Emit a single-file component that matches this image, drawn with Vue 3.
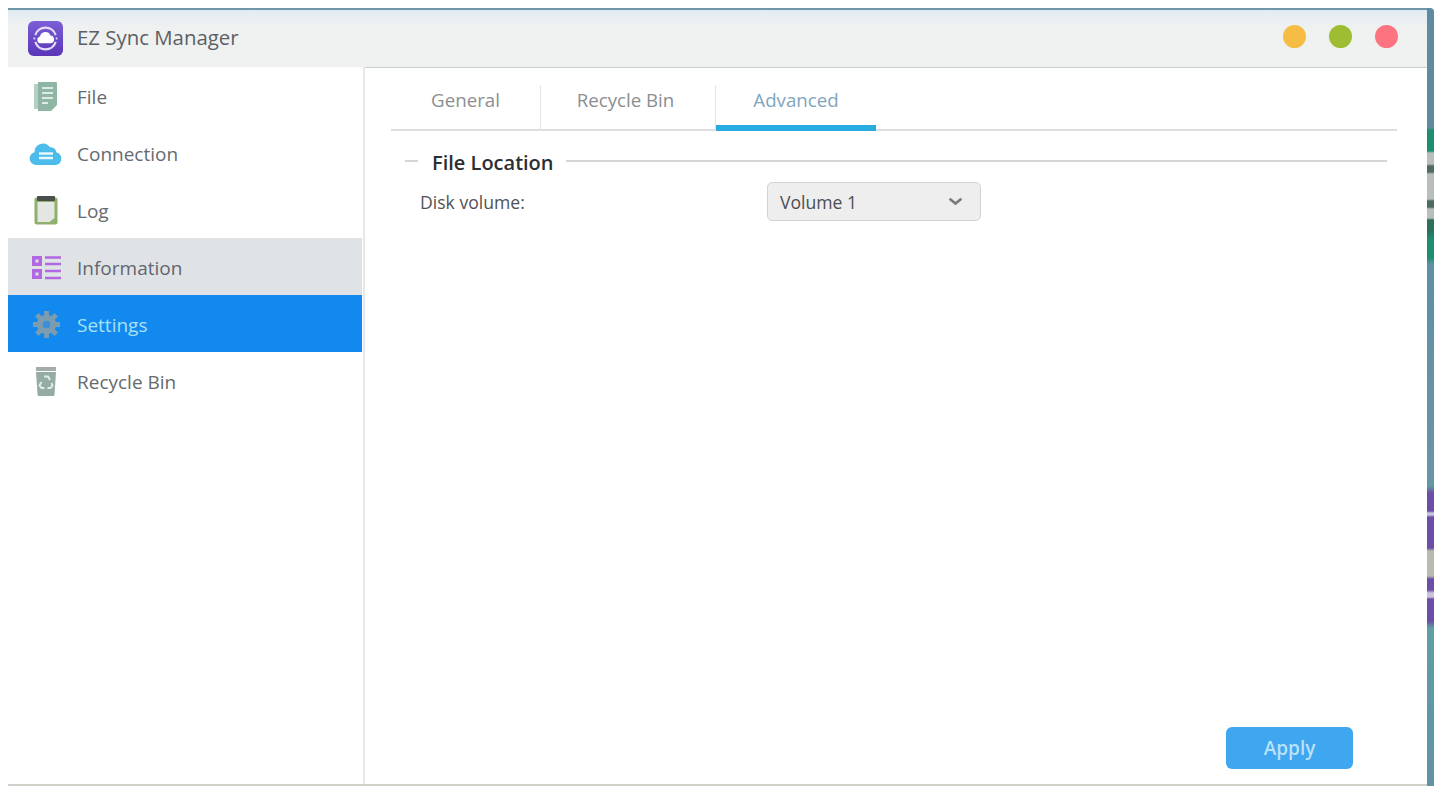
<template>
  <div class="desktop">
    <div class="window">
      <!-- title bar -->
      <header class="titlebar">
        <div class="app-logo">
          <svg viewBox="0 0 36 36" width="35" height="35">
            <defs>
              <linearGradient id="logoBg" x1="0" y1="0" x2="0" y2="1">
                <stop offset="0" stop-color="#7b5fd6" />
                <stop offset="1" stop-color="#5a35b8" />
              </linearGradient>
            </defs>
            <rect width="36" height="36" rx="6" fill="url(#logoBg)" />
            <path d="M7.500 14.500a11 11 0 0 1 21 0M28.500 21.500a11 11 0 0 1-21 0" fill="none" stroke="#e4dcf8" stroke-width="2.200" />
            <circle cx="6.500" cy="18" r="1.200" fill="#cfc4f0" />
            <circle cx="29.500" cy="18" r="1.200" fill="#cfc4f0" />
            <path d="M13 23a3.600 3.600 0 0 1-.6-7.100 5.600 5.600 0 0 1 10.700-1 4.100 4.100 0 0 1 .4 8.100z" fill="#fff" />
          </svg>
        </div>
        <span class="app-title">EZ Sync Manager</span>
        <div class="win-buttons">
          <span class="dot dot-yellow"></span>
          <span class="dot dot-green"></span>
          <span class="dot dot-red"></span>
        </div>
      </header>

      <div class="body">
        <!-- sidebar -->
        <nav class="sidebar">
          <div
            v-for="item in menu"
            :key="item.name"
            :class="['menu-item', item.state]"
          >
            <span class="menu-icon">
              <svg v-if="item.name === 'File'" viewBox="0 0 24 29" width="24" height="29">
                <rect x="0" y="2" width="6" height="25" rx="1" fill="#b4d0c5" />
                <path d="M4 0h18a1 1 0 0 1 1 1v22l-6 6H4z" fill="#8fb5a5" />
                <path d="M8 6h11M8 11h11M8 16h11M8 21h6" stroke="#dcebe4" stroke-width="2" />
              </svg>
              <svg v-else-if="item.name === 'Connection'" viewBox="0 0 34 25" width="34" height="25">
                <path d="M7 24a6.500 6.500 0 0 1-1.500-12.800A8.500 8.500 0 0 1 21 6.200a6.500 6.500 0 0 1 6.500 5.300A6.400 6.400 0 0 1 27 24z" fill="#4cbcea" />
                <path d="M10 12.500h14M10 17h14" fill="none" stroke="#e6f6fc" stroke-width="2.400" />
              </svg>
              <svg v-else-if="item.name === 'Log'" viewBox="0 0 24 29" width="24" height="29">
                <rect x="0.500" y="1.500" width="23" height="27" rx="2" fill="#8fb06c" />
                <path d="M3.500 6h17v16l-5 4h-12z" fill="#e4e6e2" />
                <rect x="3" y="0" width="18" height="5" rx="1" fill="#4a4f4c" />
              </svg>
              <svg v-else-if="item.name === 'Information'" viewBox="0 0 30 25" width="30" height="25">
                <g fill="#b268e0">
                  <path fill-rule="evenodd" d="M1 1h10v10H1zM4.500 4.500v3h3v-3z" />
                  <path fill-rule="evenodd" d="M1 14h10v10H1zM4.500 17.500v3h3v-3z" />
                </g>
                <path d="M14 2.500h16M14 9h16M14 16h16M14 23h16" stroke="#b268e0" stroke-width="2.600" />
              </svg>
              <svg v-else-if="item.name === 'Settings'" viewBox="0 0 30 30" width="29" height="29">
                <g stroke="#7c9cb0" stroke-width="5">
                  <path d="M15 1v28M1 15h28M5 5l20 20M25 5L5 25" />
                </g>
                <circle cx="15" cy="15" r="10" fill="#7c9cb0" />
                <circle cx="15" cy="15" r="4" fill="#3c8fd8" />
              </svg>
              <svg v-else viewBox="0 0 20 29" width="20" height="29">
                <rect x="0" y="0" width="20" height="4" fill="#a3aeab" />
                <path d="M0 5h20l-1.500 22.500a1.500 1.500 0 0 1-1.500 1.500H3a1.500 1.500 0 0 1-1.500-1.500z" fill="#94aca4" />
                <!-- recycling arrows -->
                <path d="M8 9.500h4l2 3.500M15.500 16l1 2.500-2 2.500h-3M8.500 21h-3l-2-2.500 2-3.500" fill="none" stroke="#e2ece8" stroke-width="2" />
              </svg>
            </span>
            <span class="menu-label">{{ item.name }}</span>
          </div>
        </nav>

        <!-- content -->
        <main class="content">
          <div class="tabs">
            <div
              v-for="tab in tabs"
              :key="tab"
              :class="['tab', { active: tab === 'Advanced' }]"
            >
              {{ tab }}
            </div>
          </div>

          <div class="section-head">
            <span class="section-title">File Location</span>
          </div>

          <div class="form-row">
            <label class="form-label">Disk volume:</label>
            <div class="select">
              <span>Volume 1</span>
              <svg viewBox="0 0 14 8" width="15" height="9">
                <path d="M1.500 1.500L7 6l5.500-4.500" fill="none" stroke="#7a7a7a" stroke-width="2.500" />
              </svg>
            </div>
          </div>

          <div class="footer">
            <button class="btn-apply">Apply</button>
          </div>
        </main>
      </div>
    </div>
    <div class="wallpaper"></div>
  </div>
</template>

<script setup>
const menu = [
  { name: 'File', state: '' },
  { name: 'Connection', state: '' },
  { name: 'Log', state: '' },
  { name: 'Information', state: 'hover' },
  { name: 'Settings', state: 'selected' },
  { name: 'Recycle Bin', state: '' }
]

const tabs = ['General', 'Recycle Bin', 'Advanced']
</script>

<style>
html,
body {
  margin: 0;
  background: #fff;
}
</style>

<style scoped>
.desktop {
  width: 1437px;
  height: 789px;
  box-sizing: border-box;
  padding: 8px 0 3px 8px;
  display: flex;
  font-family: "Open Sans", "Noto Sans", sans-serif;
  overflow: hidden;
}

.window {
  width: 1419px;
  display: flex;
  flex-direction: column;
  background: #fff;
  border-bottom: 2px solid #cfd2c8;
}

/* sliver of the desktop behind the window */
.wallpaper {
  width: 7px;
  background: linear-gradient(
    to bottom,
    #5f8aa0 0,
    #5f8aa0 120px,
    #1d8f70 122px,
    #1d8f70 143px,
    #b9bdbb 145px,
    #b9bdbb 156px,
    #4f6a60 158px,
    #4f6a60 164px,
    #b9bdbb 166px,
    #b9bdbb 191px,
    #4f6a60 193px,
    #4f6a60 199px,
    #b9bdbb 201px,
    #b9bdbb 210px,
    #2c6f5c 212px,
    #2c6f5c 222px,
    #1d8f70 232px,
    #1d8f70 250px,
    #5f8fa5 256px,
    #6a94a8 470px,
    #5c9ca0 478px,
    #6d4ea6 485px,
    #6d4ea6 503px,
    #c9c4dc 505px,
    #c9c4dc 507px,
    #6d4ea6 509px,
    #6d4ea6 540px,
    #b8bcae 543px,
    #b8bcae 568px,
    #6d4ea6 571px,
    #6d4ea6 582px,
    #c9c4dc 585px,
    #c9c4dc 589px,
    #6d4ea6 591px,
    #6d4ea6 613px,
    #5f9ea4 620px,
    #5f93a5 100%
  );
  border-radius: 0 4px 0 0;
}

.titlebar {
  height: 60px;
  flex: none;
  box-sizing: border-box;
  display: flex;
  align-items: center;
  padding: 0 29px 4px 20px;
  background: linear-gradient(to bottom, #e1ecf2 0, #eff1f1 30%, #f0f2f2 100%);
  border-top: 2px solid #6f95a8;
  border-bottom: 1px solid #c9cdcf;
}

.app-logo {
  display: flex;
  width: 36px;
  height: 35px;
  margin: 4px 13px 0 0;
}

.app-title {
  font-size: 20.4px;
  color: #5c6064;
}

.win-buttons {
  margin-left: auto;
  display: flex;
  gap: 23px;
}

.dot {
  width: 23px;
  height: 23px;
  border-radius: 50%;
}

.dot-yellow {
  background: #f6bd45;
}

.dot-green {
  background: #9fbd32;
}

.dot-red {
  background: #fb7480;
}

.body {
  flex: 1;
  display: flex;
  min-height: 0;
}

.sidebar {
  width: 357px;
  flex: none;
  box-sizing: border-box;
  border-right: 2px solid #e6e7e8;
  padding-right: 1px;
  margin-top: -1px;
  background: #fff;
}

.menu-item {
  height: 57px;
  box-sizing: border-box;
  padding: 2px 0 0 20px;
  display: flex;
  align-items: center;
  color: #666a6d;
  font-size: 19px;
}

.menu-item.hover {
  background: #dfe3e6;
  color: #62666e;
}

.menu-item.selected {
  background: #1189ee;
  color: #a8e2f8;
}

.menu-icon {
  width: 36px;
  height: 34px;
  margin-right: 13px;
  display: flex;
  align-items: center;
  justify-content: center;
}

.content {
  flex: 1;
  display: flex;
  flex-direction: column;
  padding: 0 30px 15px 26px;
  min-width: 0;
}

.tabs {
  height: 61px;
  flex: none;
  display: flex;
  align-items: flex-end;
  border-bottom: 2px solid #dcdedf;
}

.tab {
  width: 150px;
  height: 46px;
  display: flex;
  align-items: center;
  justify-content: center;
  box-sizing: border-box;
  color: #8b8e90;
  font-size: 18.700px;
  padding-bottom: 18px;
  margin-bottom: -2px;
  border-right: 1px solid #e2e4e5;
}

.tab:nth-child(2) {
  width: 175px;
  padding-right: 5px;
}

.tab:last-child {
  width: 160px;
  border-right: none;
  color: #7fa5bd;
  border-bottom: 6px solid #27abe0;
  padding-bottom: 12px;
}

.section-head {
  display: flex;
  align-items: center;
  margin: 18px 10px 0 14px;
  height: 26px;
}

.section-head::before {
  content: "";
  width: 13px;
  height: 2px;
  background: #d3d5d6;
  margin: 0 14px 3px 0;
}

.section-head::after {
  content: "";
  flex: 1;
  height: 2px;
  background: #d3d5d6;
  margin: 0 0 3px 12px;
}

.section-title {
  font-size: 20px;
  font-weight: 600;
  color: #2c2f33;
}

.form-row {
  display: flex;
  align-items: center;
  margin: 7px 0 0 29px;
}

.form-label {
  width: 347px;
  font-size: 17.600px;
  color: #4f5256;
}

.select {
  width: 214px;
  height: 39px;
  box-sizing: border-box;
  display: flex;
  align-items: center;
  justify-content: space-between;
  padding: 0 17px 0 12px;
  background: #eeeeee;
  border: 1px solid #d2d3d4;
  border-radius: 5px;
  font-size: 17.600px;
  color: #4c4f53;
}

.footer {
  margin-top: auto;
  display: flex;
  justify-content: flex-end;
  padding-right: 44px;
}

.btn-apply {
  width: 127px;
  height: 42px;
  border: none;
  border-radius: 6px;
  background: #3fa6f0;
  color: #b9e2f8;
  font-family: inherit;
  font-size: 19px;
  font-weight: 600;
}
</style>
